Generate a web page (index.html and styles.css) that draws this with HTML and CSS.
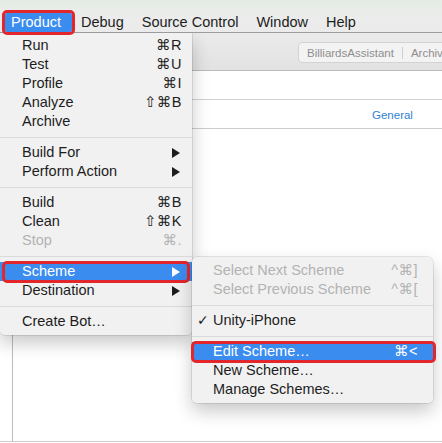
FILE: index.html
```html
<!DOCTYPE html>
<html>
<head>
<meta charset="utf-8">
<link rel="stylesheet" href="styles.css">
</head>
<body>
<div class="screen">
  <div class="menubar">
    <span class="mb-item active">Product</span>
    <span class="mb-item">Debug</span>
    <span class="mb-item">Source Control</span>
    <span class="mb-item">Window</span>
    <span class="mb-item">Help</span>
  </div>
  <div class="toolbar">
    <div class="pathctl"><span>BilliardsAssistant</span><span class="pipe"></span><span>Archive</span></div>
  </div>
  <div class="blankbar"></div>
  <div class="tabs"><span class="tab">General</span></div>
  <div class="content">
    <div class="sidebar"></div>
    <div class="main"></div>
  </div>
  <div class="footer"></div>

  <div class="menu product-menu">
    <div class="mi"><span>Run</span><span class="sc">⌘R</span></div>
    <div class="mi"><span>Test</span><span class="sc">⌘U</span></div>
    <div class="mi"><span>Profile</span><span class="sc">⌘I</span></div>
    <div class="mi"><span>Analyze</span><span class="sc">⇧⌘B</span></div>
    <div class="mi"><span>Archive</span></div>
    <div class="sep"></div>
    <div class="mi"><span>Build For</span><span class="arrow"></span></div>
    <div class="mi"><span>Perform Action</span><span class="arrow"></span></div>
    <div class="sep"></div>
    <div class="mi"><span>Build</span><span class="sc">⌘B</span></div>
    <div class="mi"><span>Clean</span><span class="sc">⇧⌘K</span></div>
    <div class="mi dis"><span>Stop</span><span class="sc">⌘.</span></div>
    <div class="sep"></div>
    <div class="mi hl mark-scheme"><span>Scheme</span><span class="arrow"></span></div>
    <div class="mi"><span>Destination</span><span class="arrow"></span></div>
    <div class="sep"></div>
    <div class="mi"><span>Create Bot…</span></div>
  </div>

  <div class="menu sub-menu">
    <div class="mi dis"><span>Select Next Scheme</span><span class="sc">^⌘]</span></div>
    <div class="mi dis"><span>Select Previous Scheme</span><span class="sc">^⌘[</span></div>
    <div class="sep"></div>
    <div class="mi"><span><span class="check">✓</span>Unity-iPhone</span></div>
    <div class="sep"></div>
    <div class="mi hl mark-edit"><span>Edit Scheme…</span><span class="sc">⌘&lt;</span></div>
    <div class="mi"><span>New Scheme…</span></div>
    <div class="mi"><span>Manage Schemes…</span></div>
  </div>
</div>
</body>
</html>
```

FILE: styles.css
```css
* {
  box-sizing: border-box;
  margin: 0;
  padding: 0;
}

body {
  margin: 0;
  width: 442px;
  height: 443px;
  overflow: hidden;
  background: #ffffff;
  font-family: "Liberation Sans", Arial, "DejaVu Sans", sans-serif;
}

.screen {
  position: relative;
  width: 442px;
  height: 443px;
  display: flex;
  flex-direction: column;
  overflow: hidden;
}

/* ---------- menu bar ---------- */
.menubar {
  position: relative;
  z-index: 5;
  height: 33px;
  flex: none;
  padding: 13px 0 0 5px;
  display: flex;
  align-items: flex-start;
  background: linear-gradient(#e4ebe4, #eaecea 35%, #ebebeb);
  border-bottom: 1px solid #9c9c9c;
  font-size: 14.5px;
  color: #1d1d1d;
  white-space: nowrap;
}

.mb-item {
  height: 19px;
  line-height: 19px;
  padding: 0 9px;
}

.mb-item.active {
  background: #3b8cef;
  color: #ffffff;
  padding: 0 11px 0 6px;
  border-radius: 2px;
  outline: 3px solid #e2262c;
  outline-offset: 0;
}

/* ---------- toolbar ---------- */
.toolbar {
  height: 38px;
  flex: none;
  padding: 9px 0 0 298px;
  background: linear-gradient(#ebebeb, #e2e2e2);
  border-bottom: 1px solid #bababa;
  display: flex;
  align-items: flex-start;
}

.pathctl {
  flex: none;
  height: 21px;
  display: flex;
  align-items: center;
  gap: 8px;
  padding: 0 8px;
  background: #f3f3f3;
  border: 1px solid #d3d3d3;
  border-radius: 4px;
  font-size: 11.5px;
  color: #8e8e8e;
  white-space: nowrap;
}

.pipe {
  width: 1px;
  height: 12px;
  background: #cfcfcf;
}

.blankbar {
  height: 29px;
  flex: none;
  background: #ffffff;
  border-bottom: 1px solid #d2d2d2;
}

.tabs {
  height: 29px;
  flex: none;
  padding-left: 372px;
  border-bottom: 1px solid #cdcdcd;
  line-height: 28px;
}

.tab {
  font-size: 11.5px;
  color: #2f7fd3;
}

.content {
  flex: 1;
  display: flex;
}

.sidebar {
  width: 13px;
  border-right: 1px solid #bcbcbc;
}

.main {
  flex: 1;
}

.footer {
  height: 2px;
  flex: none;
  border-top: 1px solid #cdcdcd;
}

/* ---------- menus ---------- */
.menu {
  position: absolute;
  z-index: 3;
  background: rgba(241, 241, 241, 0.98);
  font-size: 14.5px;
  color: #1d1d1d;
  white-space: nowrap;
  box-shadow: 0 0 0 0.5px rgba(0, 0, 0, 0.18), 0 8px 18px rgba(0, 0, 0, 0.22);
}

.product-menu {
  left: 0;
  top: 33px;
  width: 192px;
  padding: 3px 0 4px;
  border-radius: 0 0 5px 5px;
}

.sub-menu {
  left: 192px;
  top: 257px;
  width: 241px;
  padding: 4px 0;
  border-radius: 5px;
}

.mi {
  position: relative;
  height: 19px;
  line-height: 19px;
  display: flex;
  justify-content: space-between;
  align-items: center;
  padding: 0 10px 0 22px;
}

.sub-menu .mi {
  padding: 0 15px 0 21px;
}

.sc {
  font-family: "Liberation Sans", "DejaVu Sans", sans-serif;
  letter-spacing: 0.5px;
}

.arrow {
  width: 0;
  height: 0;
  margin-right: 2px;
  border-left: 8px solid #1d1d1d;
  border-top: 5px solid transparent;
  border-bottom: 5px solid transparent;
}

.dis {
  color: #b3b3b3;
}

.check {
  display: inline-block;
  width: 16px;
  margin-left: -16px;
  font-family: "DejaVu Sans", sans-serif;
  font-size: 14px;
}

.sep {
  height: 12px;
  display: flex;
  align-items: center;
}

.sep::before {
  content: "";
  flex: 1;
  height: 1px;
  background: #dadada;
}

.mi.hl {
  background: #3b8cef;
  color: #ffffff;
}

.mi.hl .arrow {
  border-left-color: #ffffff;
}

.mark-scheme::after,
.mark-edit::after {
  content: "";
  position: absolute;
  border: 3px solid #e2262c;
  border-radius: 5px;
}

.mark-scheme::after {
  left: 2px;
  right: 2px;
  top: -1px;
  bottom: -2px;
}

.mark-edit::after {
  left: -1px;
  right: -3px;
  top: -1px;
  bottom: -2px;
}
```
